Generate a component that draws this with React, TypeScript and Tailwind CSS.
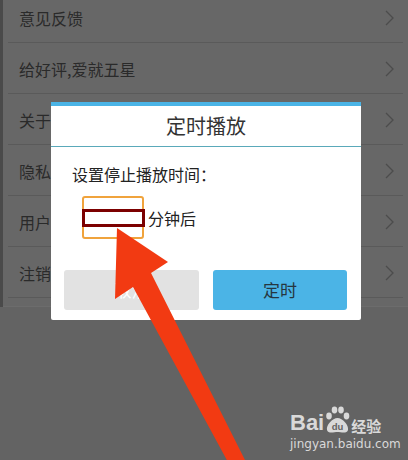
import React from "react";

const rows = ["意见反馈", "给好评,爱就五星", "关于", "隐私", "用户", "注销"];

function Chevron() {
  return (
    <svg width="9" height="16" viewBox="0 0 9 16" className="mr-[14px]">
      <polyline points="1,1 8,8 1,15" fill="none" stroke="#4c4c4c" strokeWidth="1.3" />
    </svg>
  );
}

export default function App() {
  const cjk = { fontFamily: '"Noto Sans CJK SC", "Noto Sans", sans-serif' };
  return (
    <div className="relative w-[408px] h-[460px] overflow-hidden bg-[#636363]" style={cjk}>
      {/* background list */}
      <div className="flex flex-col mt-[-8px] bg-[#676767] border-l-[3px] border-[#4a4a4a]">
        {rows.map((r) => (
          <div key={r} className="flex h-[51px] items-center justify-between pl-[16px] relative">
            <span className="text-[16px] text-[#2a2a2a] leading-none">{r}</span>
            <Chevron />
            <div className="absolute bottom-0 left-[5px] right-[5px] h-px bg-[#5a5a5a]" />
          </div>
        ))}
        <div className="h-[9px] border-b border-[#6c6c6c]" />
      </div>

      {/* dialog */}
      <div className="absolute left-[51px] top-[102px] w-[310px] h-[218px] bg-white flex flex-col rounded-[2px]">
        <div className="h-[4px] bg-[#4ab4e6]" />
        <div className="h-[41px] flex items-center justify-center border-b border-[#5aa9ba]">
          <span className="text-[20px] text-[#333] leading-none">定时播放</span>
        </div>
        <div className="pl-[21px] pt-[19px] text-[16px] text-[#222] leading-none">设置停止播放时间：</div>
        <div className="flex items-center pl-[31px] mt-[14px]">
          <div className="relative w-[62px] h-[43px] border-2 border-[#f0a33c] rounded-[3px]">
            <div className="absolute left-[-2px] top-[11px] w-[63px] h-[18px] border-[3px] border-[#7c0000]" />
          </div>
          <span className="ml-[4px] text-[16px] text-[#222] leading-none">分钟后</span>
        </div>
        <div className="flex gap-[14px] px-[13px] mt-[31px]">
          <div className="w-[135px] h-[40px] rounded-[3px] bg-[#e2e2e2] flex items-center justify-center text-[17px] text-white">取消</div>
          <div className="w-[134px] h-[40px] rounded-[3px] bg-[#4bb4e6] flex items-center justify-center text-[17px] text-[#263640]">定时</div>
        </div>
      </div>

      {/* red arrow */}
      <svg className="absolute left-0 top-0" width="408" height="460" viewBox="0 0 408 460">
        <polygon
          points="117,228 168,262 151,273 247,464 229,464 133,287 115,299"
          fill="#f23a12"
        />
      </svg>

      {/* watermark */}
      <div className="absolute left-[290px] top-[405px] flex flex-col text-[#d9d9d9]">
        <div className="flex items-end h-[29px]">
          <span className="text-[22px] font-bold leading-none" style={{ fontFamily: '"Liberation Sans", Arial, sans-serif' }}>Bai</span>
          <svg width="25" height="28" viewBox="0 0 25 28" className="mx-[1px]">
            <ellipse cx="4" cy="10" rx="2.8" ry="3.4" fill="#d9d9d9" />
            <ellipse cx="9.5" cy="4" rx="2.8" ry="3.4" fill="#d9d9d9" />
            <ellipse cx="16" cy="4" rx="2.8" ry="3.4" fill="#d9d9d9" />
            <ellipse cx="21.5" cy="10" rx="2.8" ry="3.4" fill="#d9d9d9" />
            <path d="M12.5,12 C17.5,12 24,19 23,24 C22,28 16,26 12.5,26 C9,26 3,28 2,24 C1,19 7.5,12 12.5,12 Z" fill="#d9d9d9" />
            <text x="12.5" y="24" textAnchor="middle" fontSize="9.5" fontWeight="bold" fill="#636363" fontFamily="Liberation Sans, Arial, sans-serif">du</text>
          </svg>
          <span className="text-[15px] leading-none mb-[1px] font-bold">经验</span>
        </div>
        <span className="text-[12px] leading-none mt-[4px]" style={{ fontFamily: '"DejaVu Sans", sans-serif' }}>jingyan.baidu.com</span>
      </div>
    </div>
  );
}
